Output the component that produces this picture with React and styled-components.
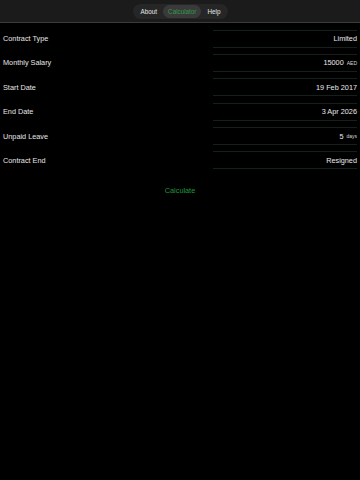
import React from "react";
import styled, { createGlobalStyle } from "styled-components";

const GlobalStyle = createGlobalStyle`
  html, body {
    margin: 0;
    padding: 0;
    background: #000;
  }
  body {
    font-family: "Liberation Sans", Arial, sans-serif;
    -webkit-font-smoothing: antialiased;
  }
`;

const Page = styled.div`
  width: 360px;
  height: 480px;
  background: #000;
  color: #e6e6e6;
  overflow: hidden;
`;

const TopBar = styled.header`
  height: 22px;
  background: #1b1b1b;
  border-bottom: 1px solid #3b3b3b;
  display: flex;
  align-items: center;
  justify-content: center;
`;

const Segmented = styled.nav`
  display: flex;
  align-items: center;
  height: 15px;
  padding: 0 2px;
  margin-top: 1px;
  margin-left: 1px;
  border-radius: 8px;
  background: #262626;
`;

const Segment = styled.button`
  border: none;
  height: 13px;
  padding: 0 ${(p) => p.$pad}px;
  border-radius: 7px;
  font-family: inherit;
  font-size: 6.3px;
  background: ${(p) => (p.$active ? "#3a3a3a" : "transparent")};
  color: ${(p) => (p.$active ? "#2f9a4d" : "#e8e8e8")};
  cursor: pointer;
`;

const Form = styled.section`
  display: flex;
  flex-direction: column;
  gap: 7.4px;
  padding-top: 7px;
`;

const Row = styled.div`
  display: flex;
  align-items: center;
  height: 17px;
`;

const Label = styled.span`
  width: 210px;
  padding-left: 3px;
  font-size: 7.3px;
  color: #e6e6e6;
`;

const Field = styled.div`
  flex: 1;
  height: 16px;
  margin-right: 3px;
  border-top: 1px solid #14211b;
  border-bottom: 1px solid #14211b;
  display: flex;
  align-items: center;
  justify-content: flex-end;
  gap: 3px;
  font-size: 7.3px;
  color: #e8e8e8;
`;

const Unit = styled.span`
  font-size: 5px;
  color: #d8d8d8;
`;

const Action = styled.div`
  display: flex;
  justify-content: center;
  padding-top: 17px;
`;

const CalcButton = styled.button`
  border: none;
  background: transparent;
  font-family: inherit;
  font-size: 7.3px;
  color: #1f9a3e;
  padding: 0;
  cursor: pointer;
`;

const fields = [
  { label: "Contract Type", value: "Limited" },
  { label: "Monthly Salary", value: "15000", unit: "AED" },
  { label: "Start Date", value: "19 Feb 2017" },
  { label: "End Date", value: "3 Apr 2026" },
  { label: "Unpaid Leave", value: "5", unit: "days" },
  { label: "Contract End", value: "Resigned" },
];

export default function App() {
  return (
    <Page>
      <GlobalStyle />
      <TopBar>
        <Segmented>
          <Segment $pad={6}>About</Segment>
          <Segment $pad={5} $active>
            Calculator
          </Segment>
          <Segment $pad={6}>Help</Segment>
        </Segmented>
      </TopBar>
      <Form>
        {fields.map((f) => (
          <Row key={f.label}>
            <Label>{f.label}</Label>
            <Field>
              <span>{f.value}</span>
              {f.unit && <Unit>{f.unit}</Unit>}
            </Field>
          </Row>
        ))}
      </Form>
      <Action>
        <CalcButton>Calculate</CalcButton>
      </Action>
    </Page>
  );
}
